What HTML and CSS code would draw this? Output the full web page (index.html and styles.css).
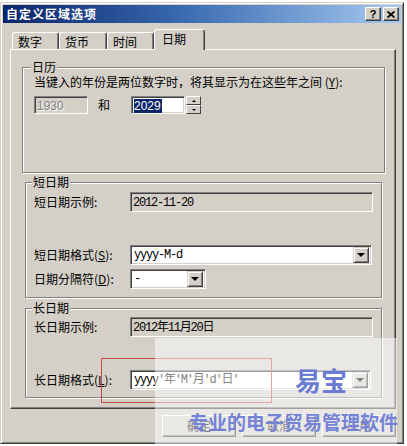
FILE: index.html
```html
<!DOCTYPE html>
<html lang="zh-CN">
<head>
<meta charset="utf-8">
<title>自定义区域选项</title>
<link rel="stylesheet" href="styles.css">
</head>
<body>
<div class="window">
  <div class="titlebar">
    <span class="title">自定义区域选项</span>
    <div class="tbtns">
      <span class="tbtn q">?</span>
      <span class="tbtn x"><svg width="8" height="7" viewBox="0 0 8 7"><path d="M0.5 0.5 L7.5 6.5 M7.5 0.5 L0.5 6.5" stroke="#000" stroke-width="1.8"/></svg></span>
    </div>
  </div>
  <div class="tabs">
    <div class="tab t1">数字</div>
    <div class="tab t2">货币</div>
    <div class="tab t3">时间</div>
    <div class="tab t4 sel">日期</div>
  </div>
  <div class="panel">
    <div class="group g-cal">
      <div class="legend">日历</div>
      <div class="note">当键入的年份是两位数字时，将其显示为在这些年之间 (<u>Y</u>):</div>
      <div class="yearrow">
        <div class="edit num disabled">1930</div>
        <span class="and">和</span>
        <div class="edit num"><span class="hl">2029</span></div>
        <div class="spin"><span class="sp"><i class="up"></i></span><span class="sp"><i class="dn"></i></span></div>
      </div>
    </div>
    <div class="group g-short">
      <div class="legend">短日期</div>
      <div class="row r-first">
        <span class="lbl">短日期示例:</span>
        <div class="edit ro mono">2012-11-20</div>
      </div>
      <div class="row r-fmt">
        <span class="lbl">短日期格式(<u>S</u>):</span>
        <div class="edit combo wide mono"><span class="ctext">yyyy-M-d</span><span class="dd"><i class="dn big"></i></span></div>
      </div>
      <div class="row r-sep">
        <span class="lbl">日期分隔符(<u>D</u>):</span>
        <div class="edit combo narrow mono"><span class="ctext">-</span><span class="dd"><i class="dn big"></i></span></div>
      </div>
    </div>
    <div class="group g-long">
      <div class="legend">长日期</div>
      <div class="row r-first2">
        <span class="lbl">长日期示例:</span>
        <div class="edit ro mono">2012年11月20日</div>
      </div>
      <div class="row r-fmt">
        <span class="lbl">长日期格式(<u>L</u>):</span>
        <div class="edit combo wide2 mono"><span class="ctext">yyyy'年'M'月'd'日'</span><span class="dd"><i class="dn big"></i></span></div>
      </div>
    </div>
  </div>
  <div class="buttons">
    <span class="btn">确定</span>
    <span class="btn">取消</span>
    <span class="btn">应用</span>
  </div>
</div>
<div class="redbox"></div>
<div class="veil"></div>
<div class="wm1">易宝</div>
<div class="wm2">专业的电子贸易管理软件</div>
</body>
</html>
```
FILE: styles.css
```css
* { box-sizing: border-box; }
body {
  margin: 0;
  background: #fff;
  font-family: "Noto Sans CJK SC", "Liberation Sans", sans-serif;
  font-size: 12px;
  line-height: 14px;
  color: #000;
  position: relative;
  width: 407px;
  height: 446px;
  overflow: hidden;
}
u { text-decoration: underline; }
.window {
  margin-top: 2px;
  width: 404px;
  height: 442px;
  background: #d4d0c8;
  border: 1px solid;
  border-color: #d4d0c8 #404040 #404040 #d4d0c8;
  box-shadow: inset 1px 1px 0 #fff, inset -1px -1px 0 #808080;
  padding: 2px;
}
.titlebar {
  height: 18px;
  display: flex;
  align-items: center;
  background: linear-gradient(to right, #0a246a 0%, #3a6ab0 45%, #a6caf0 100%);
  padding: 0 2px 0 3px;
}
.title {
  color: #fff;
  font-weight: bold;
  font-size: 12px;
  letter-spacing: 1px;
  line-height: 16px;
}
.tbtns { margin-left: auto; display: flex; gap: 2px; }
.tbtn {
  width: 16px;
  height: 14px;
  background: #d4d0c8;
  border: 1px solid;
  border-color: #fff #404040 #404040 #fff;
  box-shadow: inset -1px -1px 0 #808080;
  display: flex;
  align-items: center;
  justify-content: center;
}
.tbtn.q {
  font-family: "Liberation Sans", sans-serif;
  font-weight: bold;
  font-size: 11px;
  line-height: 12px;
}
.tabs {
  margin-top: 6px;
  height: 20px;
  display: flex;
  align-items: flex-end;
  padding-left: 9px;
}
.tab {
  height: 17px;
  background: #d4d0c8;
  border-top: 1px solid #fff;
  border-left: 1px solid #fff;
  border-right: 1px solid #404040;
  box-shadow: inset -1px 0 0 #808080;
  border-radius: 3px 3px 0 0;
  padding: 2px 0 0 5px;
  line-height: 14px;
}
.t1 { width: 47px; }
.t2 { width: 48px; }
.t3 { width: 47px; }
.t4 { width: 51px; }
.tab.sel {
  height: 21px;
  margin-bottom: -1px;
  position: relative;
  z-index: 1;
  padding-left: 7px;
}
.panel {
  margin-left: 7px;
  width: 386px;
  height: 360px;
  border: 1px solid;
  border-color: #fff #404040 #404040 #fff;
  box-shadow: inset -1px -1px 0 #808080;
  padding-top: 0;
}
.group {
  border: 1px solid #808080;
  box-shadow: 1px 1px 0 #fff, inset 1px 1px 0 #fff;
}
.legend {
  width: fit-content;
  background: #d4d0c8;
  margin-top: -8px;
  padding: 0 1px;
  line-height: 14px;
}
.g-cal {
  margin: 17px 0 0 11px;
  width: 363px;
  height: 106px;
  padding-left: 11px;
}
.g-cal .legend { margin-left: -3px; }
.note { margin-top: 1px; line-height: 14px; white-space: nowrap; }
.yearrow {
  margin-top: 7px;
  display: flex;
  align-items: center;
  height: 18px;
}
.edit {
  border: 1px solid;
  border-color: #808080 #fff #fff #808080;
  box-shadow: inset 1px 1px 0 #404040, inset -1px -1px 0 #d4d0c8;
  background: #fff;
}
.num {
  width: 54px;
  height: 18px;
  font-family: "Liberation Sans", sans-serif;
  font-size: 12px;
  line-height: 14px;
  padding: 2px 0 0 2px;
}
.disabled {
  background: #d4d0c8;
  color: #808080;
  text-shadow: 1px 1px 0 #fff;
}
.and { margin: 0 0 0 10px; width: 33px; }
.hl { background: #0a246a; color: #fff; padding: 0 1px 0 0; }
.spin {
  width: 15px;
  height: 18px;
  margin-left: 1px;
  display: flex;
  flex-direction: column;
}
.sp {
  flex: 1;
  background: #d4d0c8;
  border: 1px solid;
  border-color: #fff #404040 #404040 #fff;
  display: flex;
  align-items: center;
  justify-content: center;
}
.up, .dn { display: block; width: 0; height: 0; border-left: 2px solid transparent; border-right: 2px solid transparent; }
.up { border-bottom: 2px solid #000; }
.dn { border-top: 2px solid #000; }
.dn.big { border-left-width: 4px; border-right-width: 4px; border-top-width: 4px; }
.g-short {
  margin: 9px 0 0 14px;
  width: 357px;
  height: 116px;
  padding-left: 8px;
}
.g-short .legend, .g-long .legend { margin-left: -2px; }
.g-long {
  margin: 10px 0 0 14px;
  width: 357px;
  height: 90px;
  padding-left: 8px;
}
.row { display: flex; align-items: center; height: 20px; }
.r-first { margin-top: 3px; }
.r-first2 { margin-top: 2px; }
.r-fmt { margin-top: 33px; }
.r-sep { margin-top: 4px; }
.lbl { width: 96px; white-space: nowrap; }
.mono {
  font-family: "Liberation Mono", "Noto Sans CJK SC", monospace;
  font-size: 12px;
  letter-spacing: -1.2px;
}
.ro {
  width: 243px;
  height: 20px;
  background: #d4d0c8;
  padding: 3px 0 0 2px;
  line-height: 14px;
}
.combo {
  height: 20px;
  display: flex;
  align-items: center;
  padding: 2px;
}
.wide { width: 242px; }
.wide2 { width: 241px; }
.narrow { width: 76px; }
.ctext { flex: 1; padding-left: 1px; line-height: 14px; white-space: nowrap; overflow: hidden; }
.dd {
  width: 16px;
  height: 16px;
  background: #d4d0c8;
  border: 1px solid;
  border-color: #d4d0c8 #404040 #404040 #d4d0c8;
  box-shadow: inset 1px 1px 0 #fff, inset -1px -1px 0 #808080;
  display: flex;
  align-items: center;
  justify-content: center;
}
.buttons {
  margin-top: 6px;
  display: flex;
  justify-content: flex-end;
  gap: 6px;
  padding-right: 5px;
}
.btn {
  width: 74px;
  height: 22px;
  background: #d4d0c8;
  border: 1px solid;
  border-color: #fff #404040 #404040 #fff;
  box-shadow: inset -1px -1px 0 #808080;
  display: flex;
  align-items: center;
  justify-content: center;
  line-height: 14px;
}
.redbox {
  position: absolute;
  left: 101px;
  top: 358px;
  width: 171px;
  height: 45px;
  border: 1px solid #c84848;
}
.veil {
  position: absolute;
  left: 155px;
  top: 338px;
  width: 242px;
  height: 108px;
  background: rgba(255, 255, 255, 0.5);
}
.wm1 {
  position: absolute;
  left: 295px;
  top: 366px;
  font-size: 26px;
  line-height: 28px;
  font-weight: bold;
  color: #6b7bd4;
}
.wm2 {
  position: absolute;
  left: 189px;
  top: 411px;
  font-size: 19px;
  line-height: 21px;
  font-weight: bold;
  color: #7483d6;
  white-space: nowrap;
}
```
